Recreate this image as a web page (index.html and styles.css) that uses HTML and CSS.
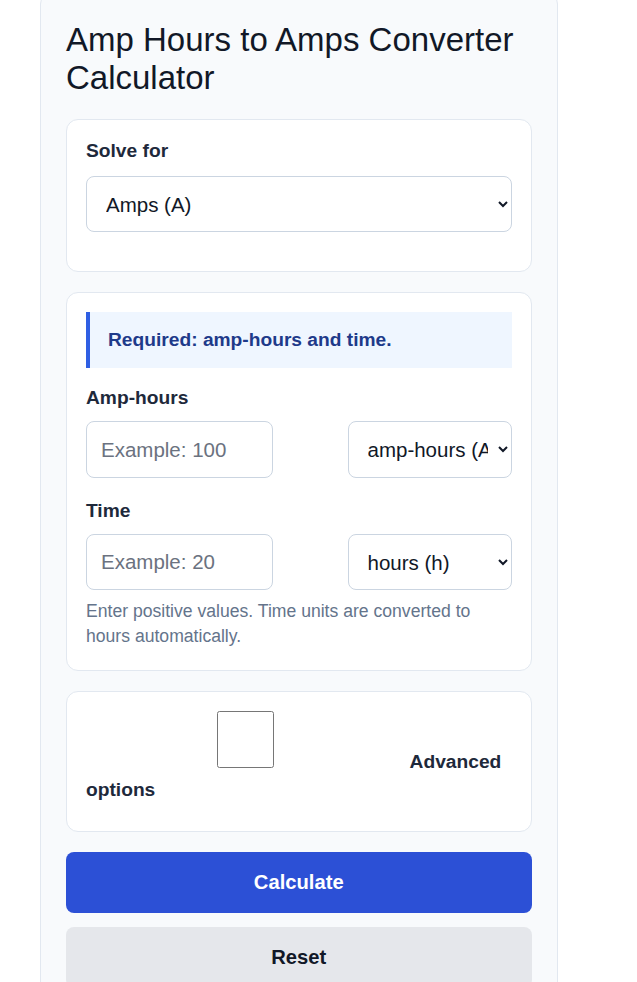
FILE: index.html
```html
<!DOCTYPE html>
<html lang="en">
<head>
<meta charset="utf-8">
<title>Amp Hours to Amps Converter Calculator</title>
<link rel="stylesheet" href="styles.css">
</head>
<body>
<main class="calc">
  <h1 class="title">Amp Hours to Amps Converter Calculator</h1>

  <section class="card">
    <div class="field field-first">
      <label class="label" for="solve">Solve for</label>
      <select id="solve" class="control select select-wide">
        <option>Amps (A)</option>
        <option>Amp-hours (Ah)</option>
        <option>Time (h)</option>
      </select>
    </div>
  </section>

  <section class="card">
    <div class="notice">Required: amp-hours and time.</div>

    <label class="label label-ah" for="ah">Amp-hours</label>
    <div class="row">
      <input id="ah" class="control input" type="text" placeholder="Example: 100">
      <select class="control select">
        <option>amp-hours (Ah)</option>
        <option>milliamp-hours (mAh)</option>
      </select>
    </div>

    <label class="label label-time" for="time">Time</label>
    <div class="row row-time">
      <input id="time" class="control input" type="text" placeholder="Example: 20">
      <select class="control select">
        <option>hours (h)</option>
        <option>minutes (min)</option>
        <option>seconds (s)</option>
      </select>
    </div>
    <p class="help">Enter positive values. Time units are converted to hours automatically.</p>
  </section>

  <section class="card">
    <label class="check-label"><input type="checkbox" class="check"> Advanced options</label>
  </section>

  <button class="btn btn-primary" type="button">Calculate</button>
  <button class="btn btn-secondary" type="button">Reset</button>
</main>
</body>
</html>
```

FILE: styles.css
```css
* {
  box-sizing: border-box;
}

body {
  margin: 0;
  font-family: "Liberation Sans", Arial, sans-serif;
  color: #111827;
  background: #ffffff;
}

.calc {
  width: 517.5px;
  margin: -8px 0 0 40px;
  padding: 25px 25px 40px;
  background: #f8fafc;
  border: 1px solid #e2e8f0;
  border-radius: 12px;
}

.title {
  margin: 3px 0 21.5px;
  font-size: 33px;
  line-height: 38.3px;
  font-weight: 400;
  color: #111827;
}

.card {
  background: #ffffff;
  border: 1px solid #e2e8f0;
  border-radius: 12px;
  padding: 19px;
  margin-bottom: 20px;
}

.field-first {
  margin-bottom: 20px;
}

.label {
  display: block;
  font-size: 19.2px;
  line-height: 24px;
  font-weight: 700;
  color: #1e293b;
  margin-bottom: 11px;
}

.field-first .label {
  margin-bottom: 13px;
}

.label-ah {
  margin-top: 18px;
}

.label-time {
  margin-top: 21px;
}

.control {
  display: block;
  font-family: "Liberation Sans", Arial, sans-serif;
  font-size: 20.5px;
  color: #111827;
  background: #ffffff;
  border: 1px solid #cbd5e1;
  border-radius: 8px;
  padding: 0 14px;
  height: 57px;
  margin: 0;
}

.select {
  padding: 0 7px 0 15px;
}

.input::placeholder {
  color: #6b7280;
}

.select-wide {
  width: 100%;
  height: 56px;
}

.row {
  display: grid;
  grid-template-columns: 187px 164px;
  justify-content: space-between;
}

.row-time .control {
  height: 56px;
}

.input {
  width: 187px;
}

.row .select {
  width: 164px;
}

.notice {
  background: #eff6ff;
  border-left: 4px solid #2f5fe3;
  padding: 16px 18px;
  font-size: 19.2px;
  line-height: 24px;
  font-weight: 700;
  color: #1e3a8a;
}

.help {
  margin: 9px 0 2px;
  font-size: 17.6px;
  line-height: 25px;
  color: #64748b;
}

.check-label {
  display: block;
  font-size: 19.2px;
  line-height: 27.7px;
  font-weight: 700;
  color: #1e293b;
  margin-bottom: 8px;
}

.check {
  width: 319px;
  height: 57px;
  margin: 0;
  vertical-align: baseline;
}

.btn {
  display: block;
  width: 100%;
  height: 61px;
  border: 0;
  border-radius: 8px;
  font-family: "Liberation Sans", Arial, sans-serif;
  font-size: 20.2px;
  font-weight: 700;
  cursor: pointer;
}

.btn-primary {
  background: #2c50d6;
  color: #ffffff;
}

.btn-secondary {
  margin-top: 14px;
  background: #e5e7eb;
  color: #111827;
}
```
